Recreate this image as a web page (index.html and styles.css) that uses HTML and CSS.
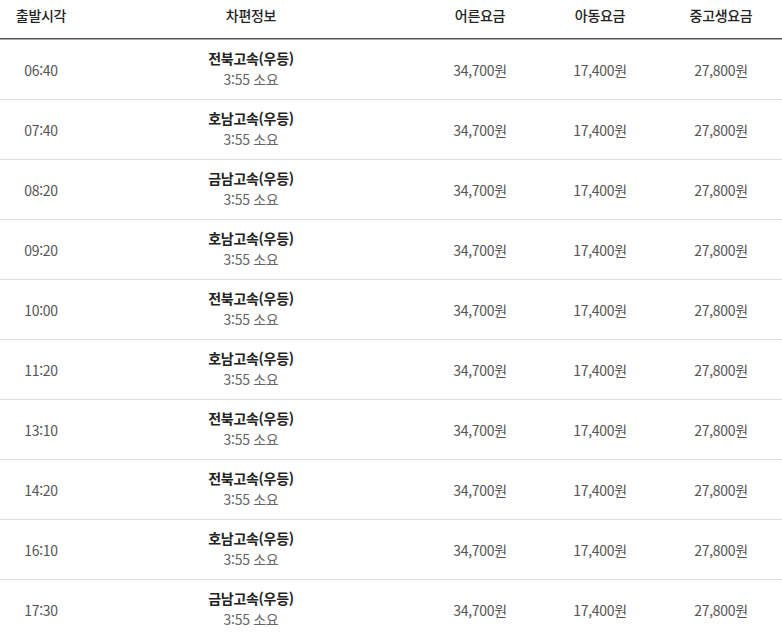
FILE: index.html
```html
<!DOCTYPE html>
<html lang="ko">
<head>
<meta charset="utf-8">
<link rel="stylesheet" href="styles.css">
</head>
<body>
<div class="table">
  <div class="row head">
    <div class="cell">출발시각</div>
    <div class="cell">차편정보</div>
    <div class="cell">어른요금</div>
    <div class="cell">아동요금</div>
    <div class="cell">중고생요금</div>
  </div>
  <div class="row"><div class="cell time">06:40</div><div class="cell info"><b>전북고속(우등)</b><span>3:55 소요</span></div><div class="cell fare">34,700원</div><div class="cell fare">17,400원</div><div class="cell fare">27,800원</div></div>
  <div class="row"><div class="cell time">07:40</div><div class="cell info"><b>호남고속(우등)</b><span>3:55 소요</span></div><div class="cell fare">34,700원</div><div class="cell fare">17,400원</div><div class="cell fare">27,800원</div></div>
  <div class="row"><div class="cell time">08:20</div><div class="cell info"><b>금남고속(우등)</b><span>3:55 소요</span></div><div class="cell fare">34,700원</div><div class="cell fare">17,400원</div><div class="cell fare">27,800원</div></div>
  <div class="row"><div class="cell time">09:20</div><div class="cell info"><b>호남고속(우등)</b><span>3:55 소요</span></div><div class="cell fare">34,700원</div><div class="cell fare">17,400원</div><div class="cell fare">27,800원</div></div>
  <div class="row"><div class="cell time">10:00</div><div class="cell info"><b>전북고속(우등)</b><span>3:55 소요</span></div><div class="cell fare">34,700원</div><div class="cell fare">17,400원</div><div class="cell fare">27,800원</div></div>
  <div class="row"><div class="cell time">11:20</div><div class="cell info"><b>호남고속(우등)</b><span>3:55 소요</span></div><div class="cell fare">34,700원</div><div class="cell fare">17,400원</div><div class="cell fare">27,800원</div></div>
  <div class="row"><div class="cell time">13:10</div><div class="cell info"><b>전북고속(우등)</b><span>3:55 소요</span></div><div class="cell fare">34,700원</div><div class="cell fare">17,400원</div><div class="cell fare">27,800원</div></div>
  <div class="row"><div class="cell time">14:20</div><div class="cell info"><b>전북고속(우등)</b><span>3:55 소요</span></div><div class="cell fare">34,700원</div><div class="cell fare">17,400원</div><div class="cell fare">27,800원</div></div>
  <div class="row"><div class="cell time">16:10</div><div class="cell info"><b>호남고속(우등)</b><span>3:55 소요</span></div><div class="cell fare">34,700원</div><div class="cell fare">17,400원</div><div class="cell fare">27,800원</div></div>
  <div class="row"><div class="cell time">17:30</div><div class="cell info"><b>금남고속(우등)</b><span>3:55 소요</span></div><div class="cell fare">34,700원</div><div class="cell fare">17,400원</div><div class="cell fare">27,800원</div></div>
</div>
</body>
</html>
```

FILE: styles.css
```css
html, body {
  margin: 0;
  padding: 0;
  background: #fff;
}
body {
  font-family: "Noto Sans CJK KR", "Noto Sans", sans-serif;
  font-size: 14px;
  color: #555;
  overflow: hidden;
}
.table {
  width: 782px;
}
.row {
  display: grid;
  grid-template-columns: 82px 338px 120px 120px 122px;
  height: 59px;
  border-bottom: 1px solid #ddd;
}
.row.head {
  height: 38px;
  border-bottom: 1px solid #555;
  box-shadow: 0 1px 0 #aaa;
  margin-bottom: 1px;
}
.row.head .cell {
  color: #222;
  font-weight: 500;
  padding-bottom: 8px;
}
.cell {
  display: flex;
  flex-direction: column;
  align-items: center;
  justify-content: center;
  text-align: center;
  line-height: 20px;
  letter-spacing: -0.3px;
}
.cell.info {
  padding-bottom: 3px;
}
.info b {
  font-weight: 700;
  color: #222;
  line-height: 21px;
}
.info span {
  color: #666;
  line-height: 20px;
}
```
